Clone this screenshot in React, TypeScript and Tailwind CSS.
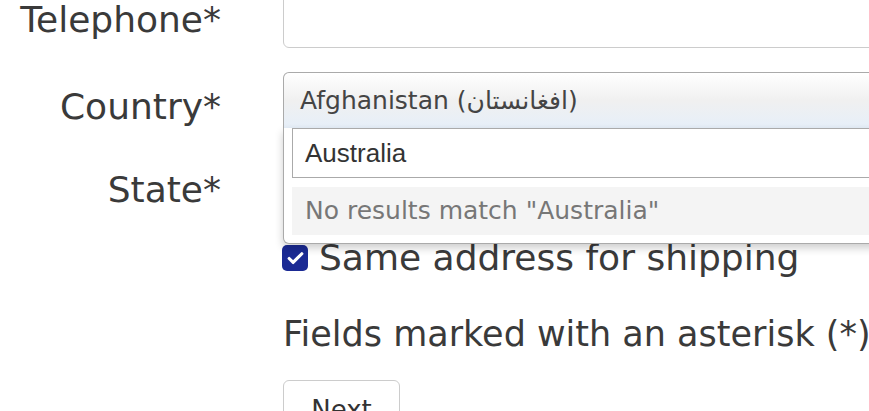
import React from 'react';
import { Check } from 'lucide-react';

const font = { fontFamily: "'DejaVu Sans', sans-serif" };

const App: React.FC = () => {
  return (
    <div className="h-[411px] w-[869px] overflow-hidden bg-white text-[#3a3a3a]" style={font}>
      <div className="-mt-[8px] flex flex-col">
        {/* Telephone */}
        <div className="flex h-[56px] items-center">
          <label className="w-[221px] shrink-0 text-right text-[36px] leading-none">Telephone*</label>
          <div className="ml-[62px] h-[56px] w-[700px] shrink-0 rounded-[6px] border border-[#ccc] bg-white" />
        </div>

        {/* Country */}
        <div className="mt-[24px] flex h-[56px] items-center">
          <label className="mt-[14px] w-[221px] shrink-0 text-right text-[36px] leading-none">Country*</label>
          <div className="relative ml-[62px] h-[56px] w-[700px] shrink-0">
            <div className="flex h-[56px] items-center rounded-t-[6px] border border-b-0 border-[#aaa] bg-gradient-to-b from-[#fff] via-[#f0f0f0] to-[#e6eff9] px-[16px] text-[25px] text-[#444]">
              Afghanistan (افغانستان)
            </div>
            <div className="absolute left-0 right-0 top-full z-10 rounded-b-[6px] border border-t-0 border-[#aaa] bg-white px-[8px] pb-[8px] shadow-[0_4px_8px_rgba(0,0,0,0.2)]">
              <div className="h-[50px] border border-[#aaa] bg-white px-[12px] text-[26px] leading-[48px] text-[#333]" style={{ fontFamily: "'Liberation Sans', sans-serif" }}>
                Australia
              </div>
              <div className="mt-[9px] h-[48px] bg-[#f4f4f4] px-[13px] text-[25px] leading-[48px] text-[#777]">
                No results match "Australia"
              </div>
            </div>
          </div>
        </div>

        {/* State */}
        <div className="mt-[34px] flex h-[56px] items-center">
          <label className="w-[221px] shrink-0 text-right text-[36px] leading-none">State*</label>
          <div className="ml-[62px] h-[56px] w-[700px] shrink-0 rounded-[6px] border border-[#aaa] bg-white" />
        </div>

        {/* Same address */}
        <div className="ml-[282px] mt-[22px] flex items-center gap-[11px]">
          <span className="flex h-[26px] w-[26px] items-center justify-center rounded-[5px] bg-[#1b2a94]">
            <Check size={19} strokeWidth={4} className="text-white" />
          </span>
          <span className="whitespace-nowrap text-[36px] leading-none">Same address for shipping</span>
        </div>

        <p className="ml-[283px] mt-[41px] whitespace-nowrap text-[35px] leading-none">
          Fields marked with an asterisk (*) are required
        </p>

        <button className="ml-[283px] mt-[28px] h-[60px] w-[117px] rounded-[6px] border border-[#ccc] bg-white text-[26px] text-[#333]">
          Next
        </button>
      </div>
    </div>
  );
};

export default App;
